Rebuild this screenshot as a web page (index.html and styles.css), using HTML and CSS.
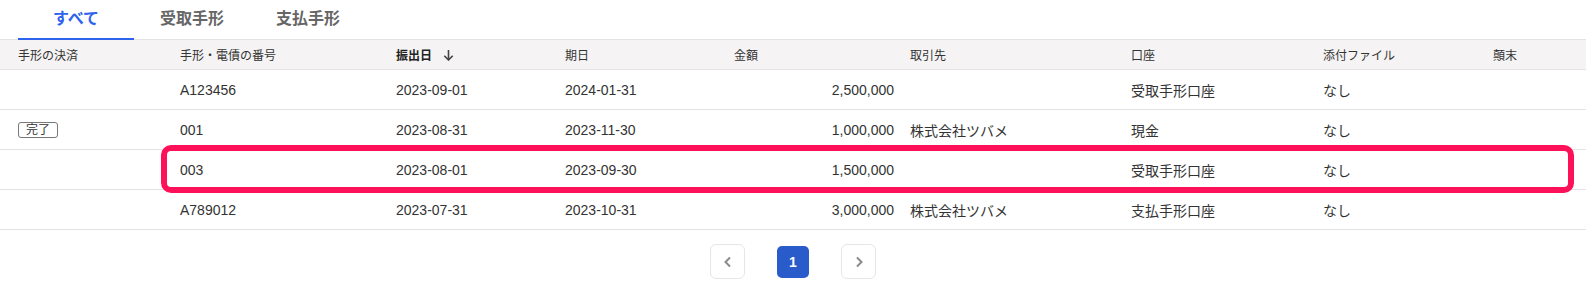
FILE: index.html
```html
<!DOCTYPE html>
<html lang="ja">
<head>
<meta charset="utf-8">
<title>手形一覧</title>
<link rel="stylesheet" href="styles.css">
</head>
<body>
<div class="page">
  <nav class="tabs">
    <div class="tab active">すべて</div>
    <div class="tab">受取手形</div>
    <div class="tab">支払手形</div>
  </nav>
  <div class="table">
    <div class="row head">
      <div class="cell first">手形の決済</div>
      <div class="cell">手形・電債の番号</div>
      <div class="cell sorted">振出日
        <svg class="sort-arrow" width="11" height="12" viewBox="0 0 11 12"><path d="M5.5 1 V11 M1.3 6.8 L5.5 11 L9.7 6.8" fill="none" stroke="#444" stroke-width="1.6"/></svg>
      </div>
      <div class="cell">期日</div>
      <div class="cell">金額</div>
      <div class="cell">取引先</div>
      <div class="cell">口座</div>
      <div class="cell">添付ファイル</div>
      <div class="cell">顛末</div>
    </div>
    <div class="row">
      <div class="cell first"></div>
      <div class="cell">A123456</div>
      <div class="cell">2023-09-01</div>
      <div class="cell">2024-01-31</div>
      <div class="cell num">2,500,000</div>
      <div class="cell"></div>
      <div class="cell">受取手形口座</div>
      <div class="cell">なし</div>
      <div class="cell"></div>
    </div>
    <div class="row">
      <div class="cell first"><span class="badge">完了</span></div>
      <div class="cell">001</div>
      <div class="cell">2023-08-31</div>
      <div class="cell">2023-11-30</div>
      <div class="cell num">1,000,000</div>
      <div class="cell">株式会社ツバメ</div>
      <div class="cell">現金</div>
      <div class="cell">なし</div>
      <div class="cell"></div>
    </div>
    <div class="row marked">
      <div class="cell first"></div>
      <div class="cell">003</div>
      <div class="cell">2023-08-01</div>
      <div class="cell">2023-09-30</div>
      <div class="cell num">1,500,000</div>
      <div class="cell"></div>
      <div class="cell">受取手形口座</div>
      <div class="cell">なし</div>
      <div class="cell"></div>
      <div class="highlight"></div>
    </div>
    <div class="row">
      <div class="cell first"></div>
      <div class="cell">A789012</div>
      <div class="cell">2023-07-31</div>
      <div class="cell">2023-10-31</div>
      <div class="cell num">3,000,000</div>
      <div class="cell">株式会社ツバメ</div>
      <div class="cell">支払手形口座</div>
      <div class="cell">なし</div>
      <div class="cell"></div>
    </div>
  </div>
  <div class="pager">
    <button class="pg nav" aria-label="前へ">
      <svg width="10" height="12" viewBox="0 0 10 12"><path d="M7 1.5 L2.5 6 L7 10.5" fill="none" stroke="#8a8a8a" stroke-width="2"/></svg>
    </button>
    <button class="pg current">1</button>
    <button class="pg nav" aria-label="次へ">
      <svg width="10" height="12" viewBox="0 0 10 12"><path d="M3 1.5 L7.5 6 L3 10.5" fill="none" stroke="#8a8a8a" stroke-width="2"/></svg>
    </button>
  </div>
</div>
</body>
</html>
```

FILE: styles.css
```css
* { box-sizing: border-box; }
html, body { margin: 0; padding: 0; background: #fff; }
body {
  font-family: "Liberation Sans", Arial, "Noto Sans CJK JP", sans-serif;
  color: #333;
}
.page { width: 1586px; }

.tabs {
  display: flex;
  height: 40px;
  padding-left: 18px;
  border-bottom: 1px solid #e4e2e2;
}
.tab {
  width: 116px;
  text-align: center;
  font-size: 16px;
  font-weight: bold;
  color: #666;
  height: 40px;
  padding-bottom: 2px;
  line-height: 38px;
}
.tab.active {
  color: #2f63ee;
  border-bottom: 2px solid #2f63ee;
}

.table { width: 100%; }
.row {
  display: grid;
  grid-template-columns: 172px 216px 169px 169px 176px 221px 192px 170px 1fr;
  height: 40px;
  border-bottom: 1px solid #e4e2e2;
  align-items: center;
  font-size: 14px;
  position: relative;
}
.row.head {
  height: 30px;
  background: #f5f3f3;
  font-size: 12px;
}
.cell {
  padding: 0 8px;
  white-space: nowrap;
  display: flex;
  align-items: center;
}
.cell.first { padding-left: 18px; }
.cell.num { justify-content: flex-end; }
.cell.sorted { font-weight: bold; color: #222; }
.sort-arrow { margin-left: 11px; }

.badge {
  display: inline-block;
  height: 16px;
  line-height: 14px;
  padding: 0 7px;
  border: 1px solid #777;
  border-radius: 3px;
  font-size: 12px;
  color: #333;
}

.highlight {
  position: absolute;
  left: 161px;
  right: 12px;
  top: -5px;
  bottom: -4px;
  border: 6px solid #fd1259;
  border-radius: 10px;
  pointer-events: none;
}

.pager {
  display: flex;
  justify-content: center;
  align-items: center;
  padding-top: 14px;
}
.pg {
  font-family: "Liberation Sans", Arial, sans-serif;
  display: flex;
  align-items: center;
  justify-content: center;
  padding: 0;
  margin: 0;
}
.pg.nav {
  width: 35px;
  height: 35px;
  background: #fff;
  border: 1px solid #e6e6e6;
  border-radius: 6px;
}
.pg.current {
  width: 32px;
  height: 32px;
  margin: 0 32px;
  background: #2a5bca;
  color: #fff;
  border: none;
  border-radius: 5px;
  font-size: 14px;
  font-weight: bold;
}
```
